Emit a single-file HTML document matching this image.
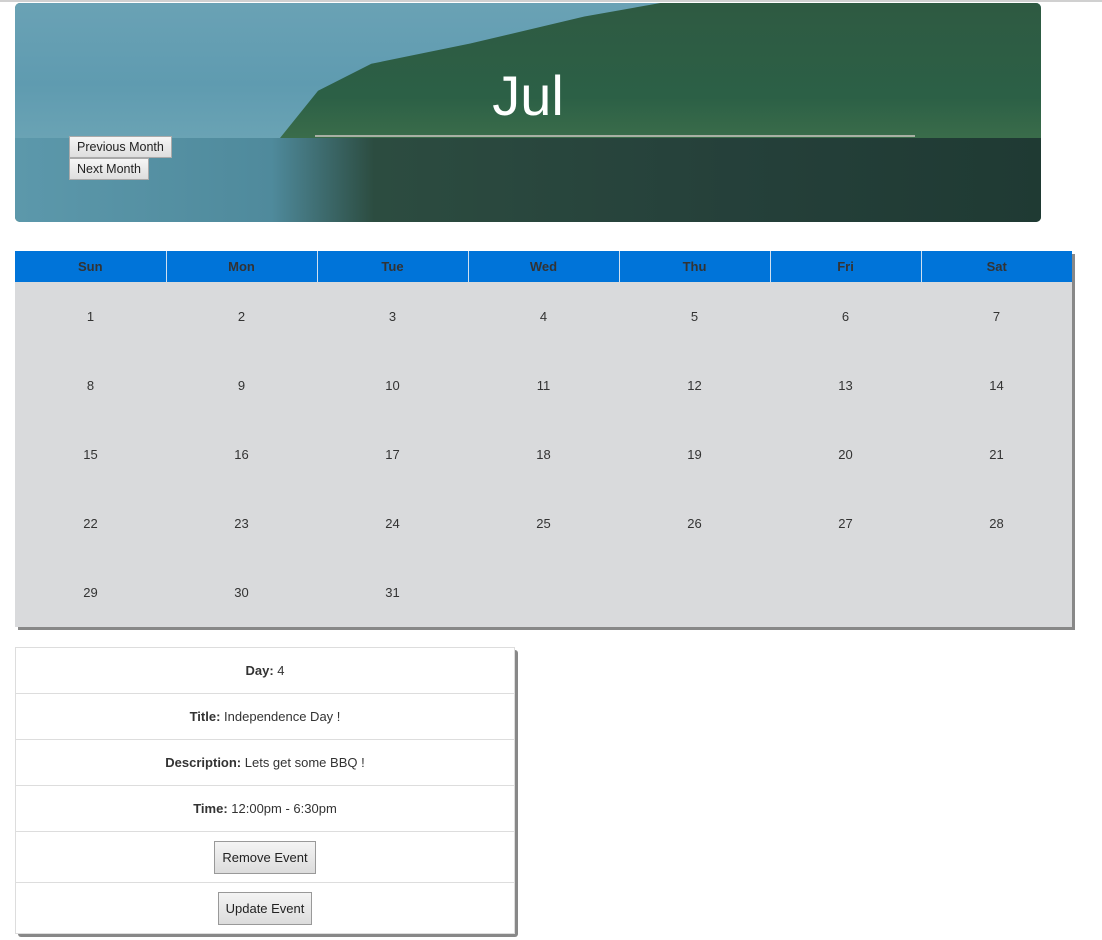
<!DOCTYPE html>
<html><head><style>
body{margin:0;background:#fff;font-family:"Liberation Sans",Arial,sans-serif;width:1102px;height:940px;overflow:hidden;position:relative}
.top{position:absolute;left:0;top:0;width:1102px;height:2px;background:#d0d0d0}
.hero{position:absolute;left:15px;top:3px;width:1026px;height:219px;border-radius:5px;overflow:hidden;background:#2f5e3e}
.sky{position:absolute;left:0;top:0;width:1026px;height:135px;background:linear-gradient(180deg,#6aa2b5,#5f9bb0 60%,#6aa3b4)}
.forest{position:absolute;left:265px;top:0;width:761px;height:135px;background:linear-gradient(180deg,#2e5a42,#2c6046 70%,#3a6c4a);clip-path:polygon(0 100%,5% 65%,12% 45%,25% 30%,40% 10%,50% 0,100% 0,100% 100%)}
.shore{position:absolute;left:300px;top:132px;width:600px;height:2px;background:#a9b0a4}
.water{position:absolute;left:0;top:135px;width:1026px;height:84px;background:linear-gradient(90deg,#5c98ab 0,#4f8a9c 25%,#2c4c40 35%,#25403a 70%,#1f3a33 100%)}
.title{position:absolute;left:0;width:1026px;top:60px;text-align:center;color:#fff;font-size:56px}
.btn{position:absolute;left:69px;font-size:12.5px;background:linear-gradient(#f6f6f6,#dedede);border:1px solid #aaa;padding:0 7px;height:20px;line-height:20px;color:#222}
table{position:absolute;left:15px;top:251px;width:1057px;border-collapse:collapse;background:#d9dadc;box-shadow:3px 3px 0 #888;table-layout:fixed}
th{background:#0074d9;color:#333;font-size:13px;height:31px;border-left:1px solid #cfe0f0;padding:0}
th:first-child{border-left:0}
td{height:69px;text-align:center;font-size:13px;color:#333;padding:0;vertical-align:middle}
.list{position:absolute;left:15px;top:647px;width:500px;box-shadow:3px 3px 0 #888;border-radius:3px}
.row{height:45px;border:1px solid #ddd;border-top:0;display:flex;align-items:center;justify-content:center;font-size:13px;color:#333;background:#fff}
.row:first-child{border-top:1px solid #ddd}
.row.b{height:50px}
.eb{font-size:13px;background:linear-gradient(#f4f4f4,#dcdcdc);border:1px solid #999;padding:0 7px;height:31px;line-height:31px;color:#222}
</style></head><body>
<div class="top"></div>
<div class="hero"><div class="sky"></div><div class="forest"></div><div class="water"></div><div class="shore"></div>
<div class="title">Jul</div></div>
<div class="btn" style="top:136px">Previous Month</div>
<div class="btn" style="top:158px">Next Month</div>
<table>
<tr><th>Sun</th><th>Mon</th><th>Tue</th><th>Wed</th><th>Thu</th><th>Fri</th><th>Sat</th></tr>
<tr><td>1</td><td>2</td><td>3</td><td>4</td><td>5</td><td>6</td><td>7</td></tr>
<tr><td>8</td><td>9</td><td>10</td><td>11</td><td>12</td><td>13</td><td>14</td></tr>
<tr><td>15</td><td>16</td><td>17</td><td>18</td><td>19</td><td>20</td><td>21</td></tr>
<tr><td>22</td><td>23</td><td>24</td><td>25</td><td>26</td><td>27</td><td>28</td></tr>
<tr><td>29</td><td>30</td><td>31</td><td></td><td></td><td></td><td></td></tr>
</table>
<div class="list">
<div class="row"><b>Day:</b>&nbsp;4</div>
<div class="row"><b>Title:</b>&nbsp;Independence Day !</div>
<div class="row"><b>Description:</b>&nbsp;Lets get some BBQ !</div>
<div class="row"><b>Time:</b>&nbsp;12:00pm - 6:30pm</div>
<div class="row b"><span class="eb">Remove Event</span></div>
<div class="row b"><span class="eb">Update Event</span></div>
</div>
</body></html>
